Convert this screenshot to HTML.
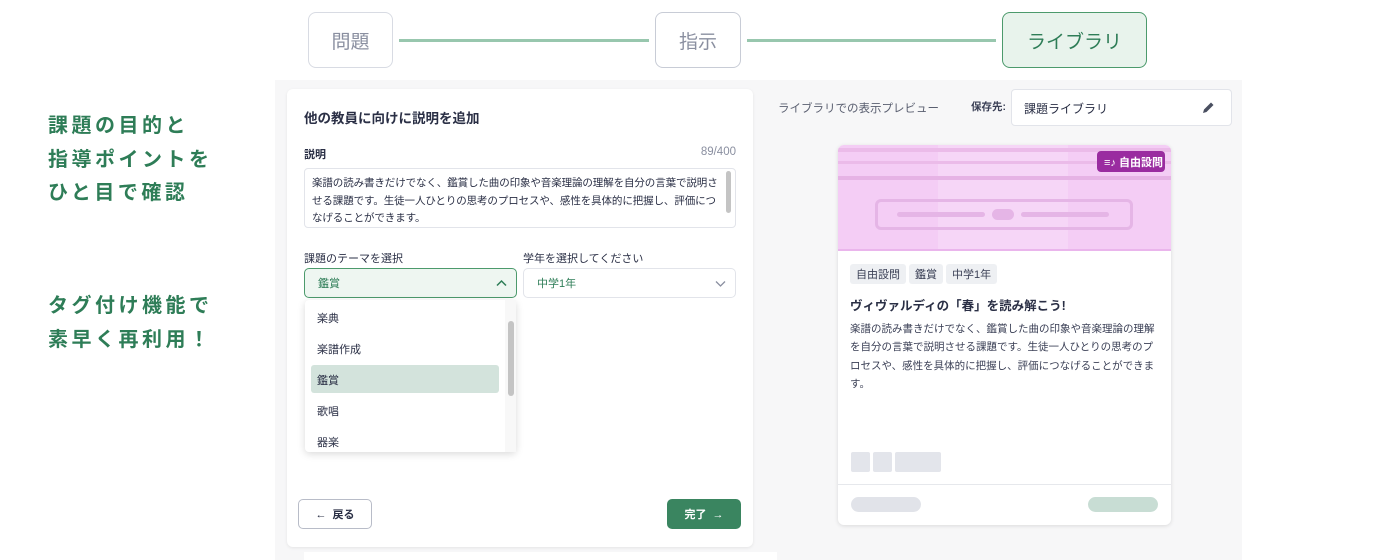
<!DOCTYPE html>
<html><head><meta charset="utf-8"><style>
*{box-sizing:border-box;margin:0;padding:0}
body{width:1400px;height:560px;background:#fff;font-family:"Liberation Sans","Noto Sans CJK JP",sans-serif;position:relative;overflow:hidden;color:#2a2f45}
.a{position:absolute}
.step{position:absolute;top:12px;height:56px;border:1.5px solid #d8dbe3;border-radius:8px;background:#fff;color:#8a8fa0;font-size:19px;display:flex;align-items:center;justify-content:center}
.line{position:absolute;top:39px;height:3px;background:#98c7ae}
.lt{position:absolute;left:48px;color:#2e7d57;font-weight:bold;font-size:20px;letter-spacing:3.5px;line-height:33.5px}
.lbl{font-size:11px;font-weight:bold;color:#2a2f45}
.sel{position:absolute;height:30px;border-radius:5px;border:1px solid #e2e4ea;font-size:11px;color:#2e7d57;padding-left:13px;display:flex;align-items:center;background:#fff}
.it{position:absolute;left:317px;font-size:11px;color:#2a2f45}
.tag{display:inline-block;background:#eef0f3;border-radius:3px;font-size:11px;padding:2px 6px;margin-right:3px;color:#3a3f55}
</style></head><body>
<div class="step" style="left:308px;width:85px">問題</div>
<div class="line" style="left:399px;width:250px"></div>
<div class="step" style="left:655px;width:86px;border-color:#c8ccd6">指示</div>
<div class="line" style="left:747px;width:249px"></div>
<div class="step" style="left:1002px;width:145px;background:#e8f3ec;border-color:#4c9a6c;color:#2e7d57">ライブラリ</div>

<div class="lt" style="top:110px">課題の目的と<br>指導ポイントを<br>ひと目で確認</div>
<div class="lt" style="top:290px">タグ付け機能で<br>素早く再利用！</div>

<div class="a" style="left:275px;top:80px;width:967px;height:480px;background:#f7f7f8"></div>
<div class="a" style="left:304px;top:552px;width:473px;height:8px;background:#fff"></div>

<div class="a" style="left:287px;top:89px;width:466px;height:458px;background:#fff;border-radius:6px;box-shadow:0 1px 3px rgba(0,0,0,.08)"></div>
<div class="a" style="left:304px;top:107px;font-size:13.5px;font-weight:bold">他の教員に向けに説明を追加</div>
<div class="a lbl" style="left:304px;top:146px">説明</div>
<div class="a" style="right:664px;top:146px;font-size:11.5px;color:#8a8fa0">89/400</div>
<div class="a" style="left:304px;top:168px;width:432px;height:60px;border:1px solid #e2e4ea;border-radius:4px;font-size:10.5px;line-height:17.5px;padding:6px 10px 0 7px;color:#2a2f45;letter-spacing:-0.1px">楽譜の読み書きだけでなく、鑑賞した曲の印象や音楽理論の理解を自分の言葉で説明させる課題です。生徒一人ひとりの思考のプロセスや、感性を具体的に把握し、評価につなげることができます。</div>
<div class="a" style="left:726px;top:171px;width:5px;height:42px;background:#c4c4c4;border-radius:3px"></div>
<div class="a lbl" style="left:304px;top:250px;font-weight:normal;color:#2a2f45">課題のテーマを選択</div>
<div class="a lbl" style="left:523px;top:250px;font-weight:normal">学年を選択してください</div>
<div class="sel" style="left:304px;top:268px;width:213px;background:#eef6f1;border-color:#4c9a6c">鑑賞
<svg class="a" style="right:9px;top:10px" width="11" height="8" viewBox="0 0 11 8"><path d="M1 6.5L5.5 2L10 6.5" fill="none" stroke="#2e7d57" stroke-width="1.5"/></svg></div>
<div class="sel" style="left:523px;top:268px;width:213px">中学1年
<svg class="a" style="right:9px;top:11px" width="11" height="8" viewBox="0 0 11 8"><path d="M1 1.5L5.5 6L10 1.5" fill="none" stroke="#8a8fa0" stroke-width="1.3"/></svg></div>

<div class="a" style="left:305px;top:300px;width:211px;height:152px;background:#fff;border-radius:4px;box-shadow:0 2px 8px rgba(0,0,0,.15)"></div>
<div class="a" style="left:505px;top:300px;width:11px;height:152px;background:#f8f8f8"></div>
<div class="a" style="left:508px;top:321px;width:6px;height:75px;background:#c4c4c4;border-radius:3px"></div>
<div class="a" style="left:311px;top:365px;width:188px;height:28px;background:#d3e3dc;border-radius:3px"></div>
<div class="it" style="top:310px">楽典</div>
<div class="it" style="top:341px">楽譜作成</div>
<div class="it" style="top:372px">鑑賞</div>
<div class="it" style="top:403px">歌唱</div>
<div class="it" style="top:434px">器楽</div>

<div class="a" style="left:298px;top:499px;width:74px;height:30px;border:1px solid #b8bcc8;border-radius:5px;font-size:11px;font-weight:bold;display:flex;align-items:center;justify-content:center">← &nbsp;戻る</div>
<div class="a" style="left:667px;top:499px;width:74px;height:30px;background:#3a8560;border-radius:5px;font-size:11px;font-weight:bold;color:#fff;display:flex;align-items:center;justify-content:center">完了 &nbsp;→</div>

<div class="a" style="left:778px;top:100px;font-size:11.5px;color:#5a5f70">ライブラリでの表示プレビュー</div>
<div class="a" style="left:971px;top:99px;font-size:10.5px;color:#3a3f55;font-weight:bold">保存先:</div>
<div class="a" style="left:1011px;top:89px;width:221px;height:37px;background:#fff;border:1px solid #e2e4ea;border-radius:4px;font-size:12px;padding:10px 0 0 12px">課題ライブラリ
<svg class="a" style="right:16px;top:11px" width="13" height="13" viewBox="0 0 13 13"><path d="M1 12l1-3.5L9 1.5l2.5 2.5L4.5 11z" fill="#4a4f60"/></svg></div>

<div class="a" style="left:838px;top:145px;width:333px;height:380px;background:#fff;border-radius:6px;box-shadow:0 1px 4px rgba(0,0,0,.12);overflow:hidden">
 <div class="a" style="left:0;top:0;width:333px;height:106px;background:#f4cdf5"></div>
 <div class="a" style="left:100px;top:0;width:130px;height:106px;background:#f6d6f7"></div>
 <div class="a" style="left:0;top:3px;width:333px;height:4px;background:#ebbbe9"></div>
 <div class="a" style="left:0;top:16px;width:333px;height:3px;background:#ebbbe9"></div>
 <div class="a" style="left:0;top:31px;width:333px;height:4px;background:#e6b3e5"></div>
 <div class="a" style="left:37px;top:54px;width:258px;height:31px;border:3px solid #e5b5e6;border-radius:6px"></div>
 <div class="a" style="left:59px;top:67px;width:88px;height:5px;background:#e5b5e6;border-radius:3px"></div>
 <div class="a" style="left:154px;top:64px;width:22px;height:11px;background:#e5b5e6;border-radius:6px"></div>
 <div class="a" style="left:183px;top:67px;width:88px;height:5px;background:#e5b5e6;border-radius:3px"></div>
 <div class="a" style="left:0;top:104px;width:333px;height:2px;background:#eab5ec"></div>
 <div class="a" style="left:259px;top:6px;width:68px;height:21px;background:#9a2ca0;border-radius:4px;color:#fff;font-size:11px;font-weight:bold;padding:3px 0 0 7px">≡♪ 自由設問</div>
 <div class="a" style="left:12px;top:119px;white-space:nowrap"><span class="tag">自由設問</span><span class="tag">鑑賞</span><span class="tag">中学1年</span></div>
 <div class="a" style="left:12px;top:150px;font-size:12.5px;font-weight:bold">ヴィヴァルディの「春」を読み解こう!</div>
 <div class="a" style="left:12px;top:175px;width:310px;font-size:10.5px;line-height:18.3px;color:#3a3f55">楽譜の読み書きだけでなく、鑑賞した曲の印象や音楽理論の理解を自分の言葉で説明させる課題です。生徒一人ひとりの思考のプロセスや、感性を具体的に把握し、評価につなげることができます。</div>
 <div class="a" style="left:13px;top:307px;width:19px;height:20px;background:#e3e5eb;border-radius:2px"></div>
 <div class="a" style="left:35px;top:307px;width:19px;height:20px;background:#e3e5eb;border-radius:2px"></div>
 <div class="a" style="left:57px;top:307px;width:46px;height:20px;background:#e3e5eb;border-radius:2px"></div>
 <div class="a" style="left:0;top:339px;width:333px;height:1px;background:#e6e8ec"></div>
 <div class="a" style="left:13px;top:352px;width:70px;height:15px;background:#e1e3e9;border-radius:8px"></div>
 <div class="a" style="left:250px;top:352px;width:70px;height:15px;background:#c8ddd4;border-radius:8px"></div>
</div>
</body></html>
